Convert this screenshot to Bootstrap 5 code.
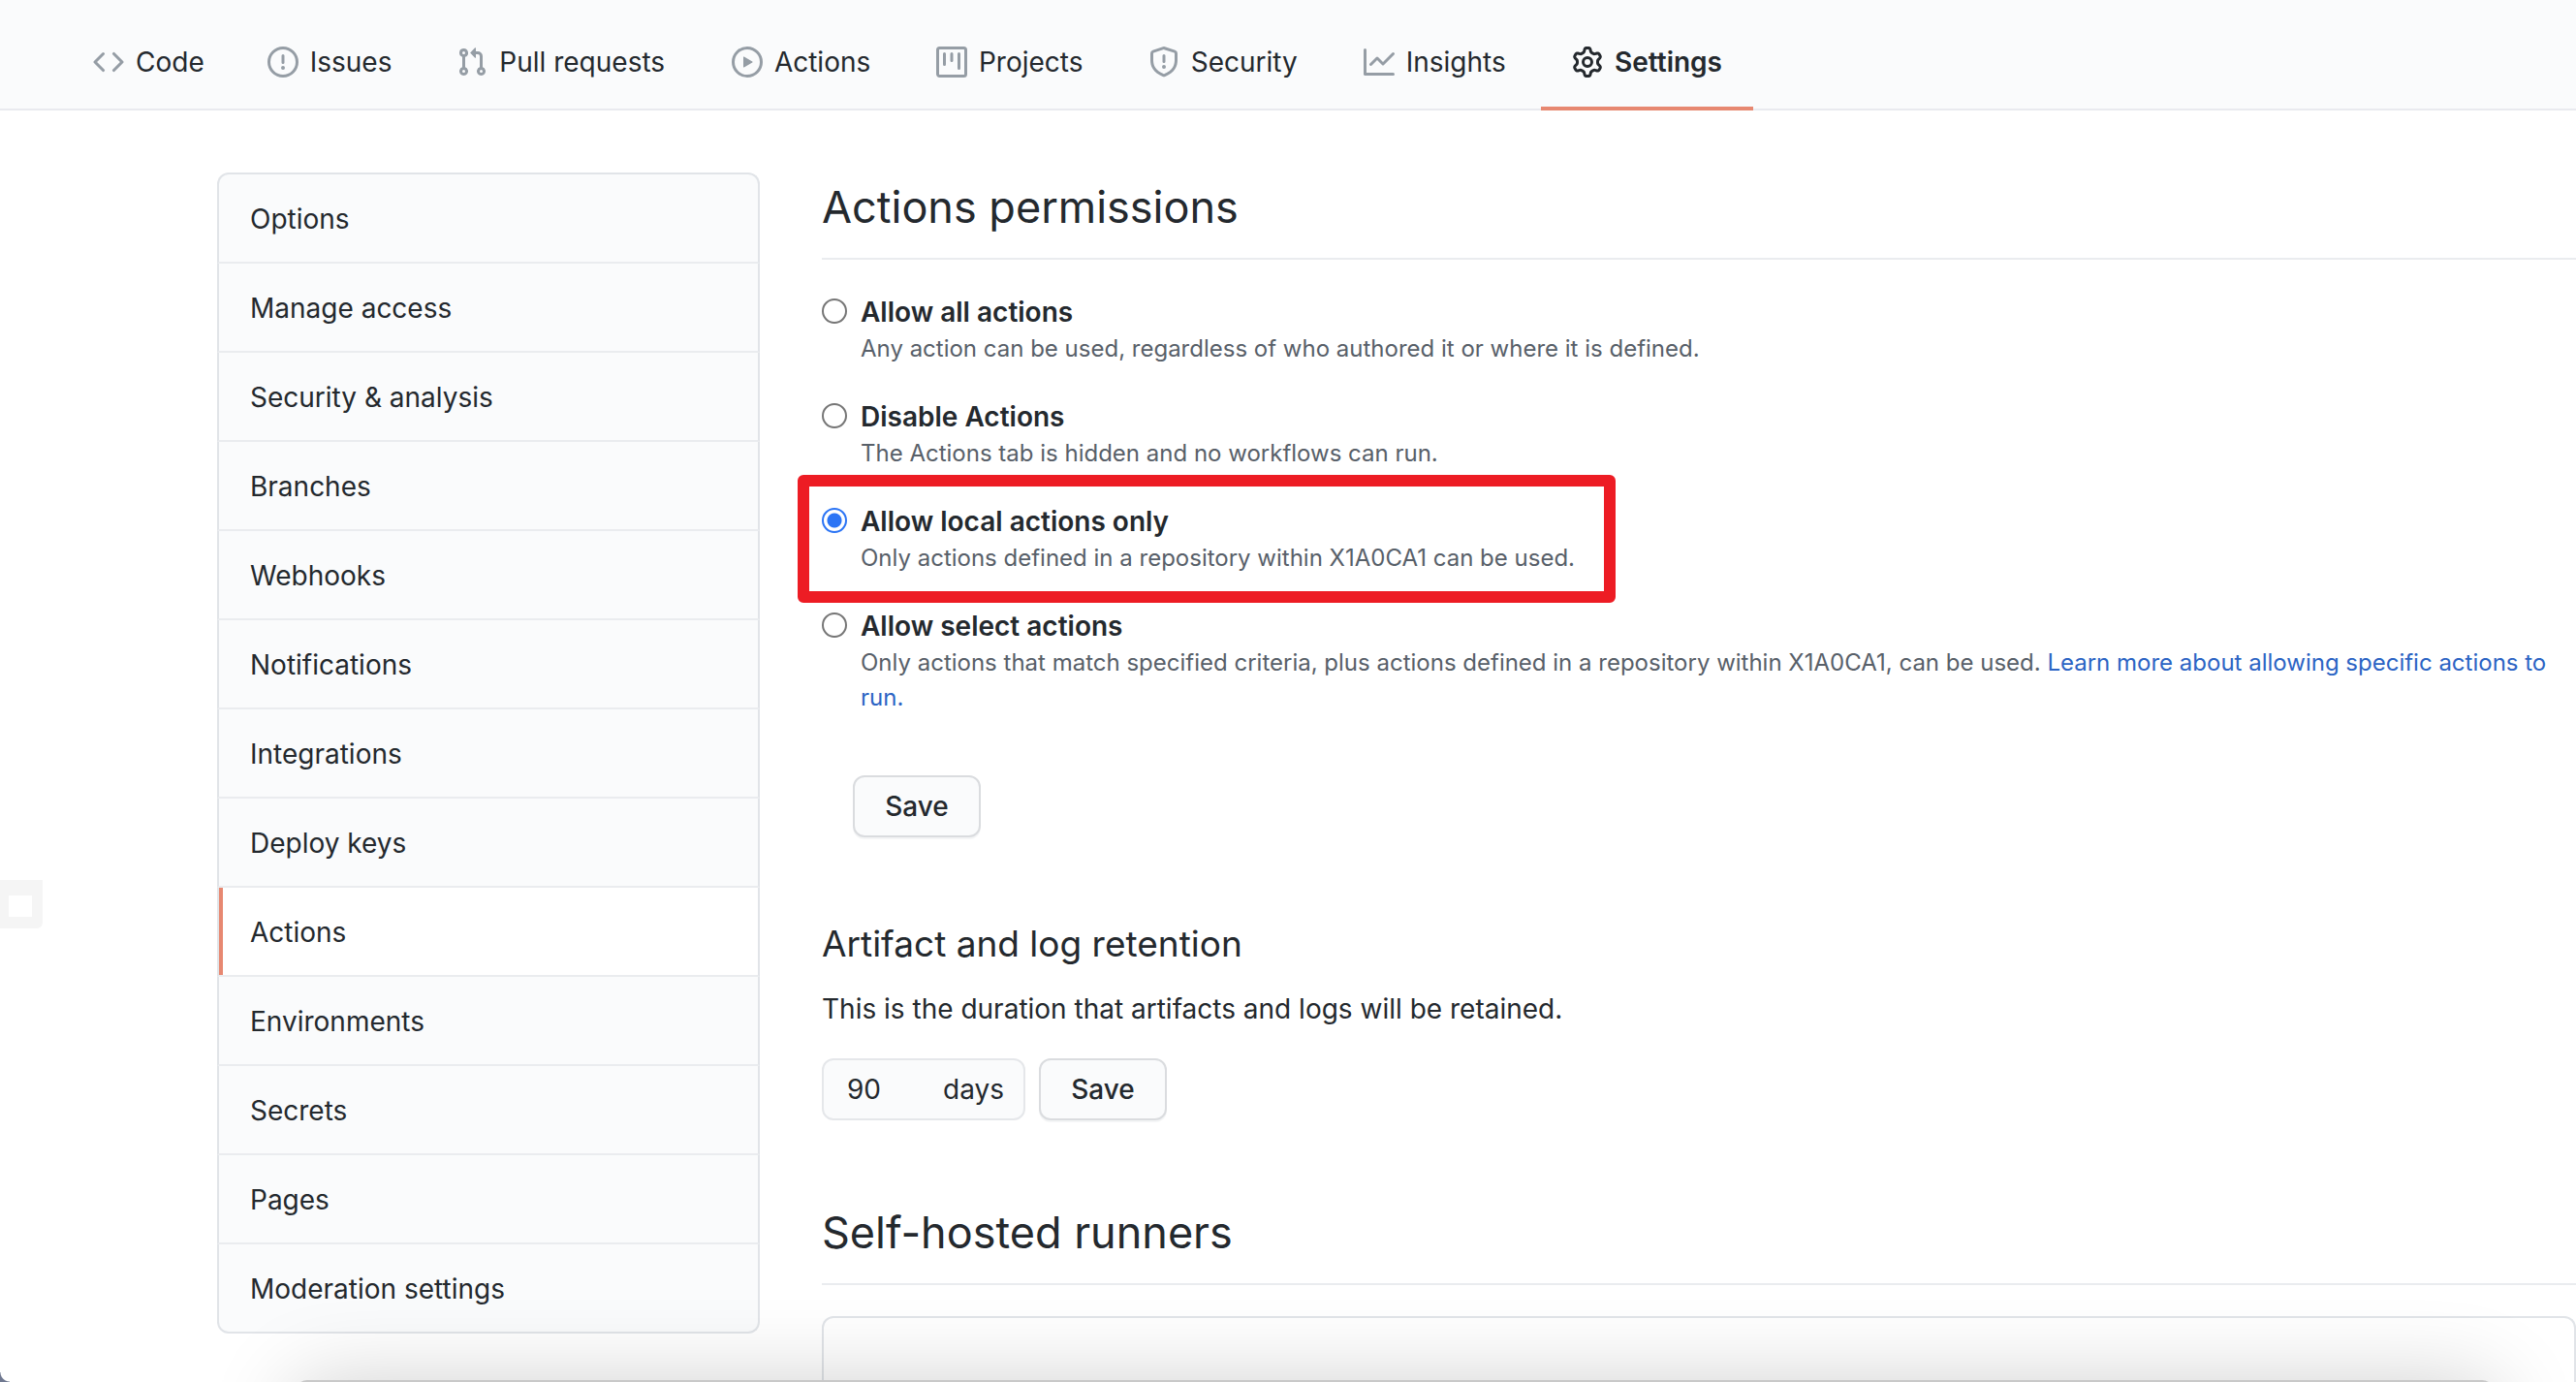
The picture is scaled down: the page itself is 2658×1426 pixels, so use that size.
<!DOCTYPE html>
<html lang="en">
<head>
<meta charset="utf-8">
<meta name="viewport" content="width=device-width, initial-scale=1">
<title>Actions settings</title>
<link href="https://cdn.jsdelivr.net/npm/bootstrap@5.3.0/dist/css/bootstrap.min.css" rel="stylesheet">
<style>
  html { overflow: hidden auto; }
  body { font-family: Inter, "Liberation Sans", sans-serif; font-size: 28px; line-height: 42px; color: #24292e; background: #fff; min-height: 100vh; position: relative; overflow: hidden; }
  .repo-nav { background: #fafbfc; border-bottom: 2px solid #e9eaef; height: 114px; padding: 18px 64px 0; }
  .repo-nav .nav-item { display: flex; margin-bottom: -2px; }
  .repo-nav .nav-link { display: flex; align-items: center; gap: 12px; padding: 0 32px; color: #24292e; border-bottom: 4px solid transparent; }
  .repo-nav .nav-link svg { width: 32px; height: 32px; fill: #959da5; flex: none; }
  .repo-nav .nav-link.active { font-weight: 600; border-color: #e78871; }
  .repo-nav .nav-link.active svg { fill: #24292e; }
  /* reserve the width of the bold label so tabs do not shift when selected */
  .tab-text::before { content: attr(data-label); display: block; height: 0; font-weight: 600; visibility: hidden; }
  .page-body { padding: 64px 0 0 224px; gap: 64px; }
  .side-menu { width: 560px; flex: none; --bs-list-group-border-width: 2px; --bs-list-group-border-color: #e1e4e8; --bs-list-group-border-radius: 12px; }
  .side-menu .list-group-item { background: #fafbfc; color: #24292e; padding: 25px 32px 23px; border-bottom-color: #eaecef; }
  .side-menu .list-group-item:last-child { border-bottom-color: #e1e4e8; }
  .side-menu .list-group-item.active { background: #fff; margin-top: 0; border-top: 0; border-color: #e1e4e8; border-bottom-color: #eaecef; box-shadow: inset 4px 0 #e78871; }
  .section-head { font-size: 45px; line-height: 72px; font-weight: 400; padding-bottom: 16px; margin-bottom: 32px; border-bottom: 2px solid #eaecef; }
  .sub-head { font-size: 37px; line-height: 60px; font-weight: 400; margin: 80px 0 16px; }
  .choice { display: grid; grid-template-columns: 26px 1fr; column-gap: 14px; margin-bottom: 30px; position: relative; }
  .choice .form-check-input { width: 26px; height: 26px; margin: 8px 0 0; border: 2px solid #767676; background-image: none; }
  .choice .form-check-input:checked { border-color: #2b74f5; background: radial-gradient(circle, #2b74f5 7px, #fff 8px); }
  .choice label { font-weight: 600; line-height: 40px; padding-top: 2px; }
  .choice p { grid-column: 2; font-size: 24px; line-height: 36px; color: #586069; margin: 0; }
  .choice a { color: #2c64c4; text-decoration: none; }
  .marker { position: absolute; top: -26px; left: -25px; width: 844px; height: 132px; border: 12px solid #ed1c24; border-radius: 6px; pointer-events: none; }
  .btn-save { width: 132px; height: 64px; padding: 0; font-size: 28px; line-height: 42px; font-weight: 500; color: #24292e; background: #fafbfc; border: 2px solid #dadcdf; border-radius: 12px; box-shadow: 0 2px 0 #f4f5f6; }
  .btn-first { margin: 32px 0 0 32px; }
  .days-box { width: 210px; height: 64px; padding: 0 20px 0 24px; background: #fafbfc; border: 2px solid #e5e7ea; border-radius: 12px; }
  .days-box input { width: 80px; border: 0; padding: 0; background: transparent; font-size: 28px; color: #24292e; }
  .retain-row { gap: 14px; margin: 30px 0 80px; }
  .runner-box { border: 2px solid #e1e4e8; border-bottom: 0; border-radius: 12px 12px 0 0; height: 68px; }
  .edge-handle { position: absolute; left: 0; top: 908px; width: 44px; height: 50px; border: solid #f5f5f5; border-width: 16px 11px 12px 9px; border-radius: 0 0 6px 0; }
  .under-shadow { position: absolute; left: 305px; right: 85px; bottom: -118px; height: 120px; border-radius: 12px; background: #c9c9c9; box-shadow: 0 4px 90px rgba(0,0,0,.2); }
  .window-corner { position: absolute; left: 0; bottom: 0; width: 10px; height: 10px; background: radial-gradient(circle at 10px 0, transparent 9px, #6f7890 10px); }
</style>
</head>
<body>
<nav class="repo-nav d-flex" aria-label="Repository">
  <ul class="nav flex-nowrap align-items-stretch">
    <li class="nav-item"><a class="nav-link" href="#"><svg viewBox="0 0 16 16" aria-hidden="true"><path d="M4.72 3.22a.75.75 0 011.06 1.06L2.06 8l3.72 3.72a.75.75 0 11-1.06 1.06L.47 8.53a.75.75 0 010-1.06l4.25-4.25zm6.56 0a.75.75 0 10-1.06 1.06L13.94 8l-3.72 3.72a.75.75 0 101.06 1.06l4.25-4.25a.75.75 0 000-1.06l-4.25-4.25z"/></svg><span class="tab-text" data-label="Code">Code</span></a></li>
    <li class="nav-item"><a class="nav-link" href="#"><svg viewBox="0 0 16 16" aria-hidden="true"><path d="M8 1.5a6.5 6.5 0 100 13 6.5 6.5 0 000-13zM0 8a8 8 0 1116 0A8 8 0 010 8zm9 3a1 1 0 11-2 0 1 1 0 012 0zm-.25-6.25a.75.75 0 00-1.5 0v3.5a.75.75 0 001.5 0v-3.5z"/></svg><span class="tab-text" data-label="Issues">Issues</span></a></li>
    <li class="nav-item"><a class="nav-link" href="#"><svg viewBox="0 0 16 16" aria-hidden="true"><path d="M7.177 3.073L9.573.677A.25.25 0 0110 .854v4.792a.25.25 0 01-.427.177L7.177 3.427a.25.25 0 010-.354zM3.75 2.5a.75.75 0 100 1.5.75.75 0 000-1.5zm-2.25.75a2.25 2.25 0 113 2.122v5.256a2.251 2.251 0 11-1.5 0V5.372A2.25 2.25 0 011.5 3.25zM11 2.5h-1V4h1a1 1 0 011 1v5.628a2.251 2.251 0 101.5 0V5A2.5 2.5 0 0011 2.5zm1 10.25a.75.75 0 111.5 0 .75.75 0 01-1.5 0zM3.75 12a.75.75 0 100 1.5.75.75 0 000-1.5z"/></svg><span class="tab-text" data-label="Pull requests">Pull requests</span></a></li>
    <li class="nav-item"><a class="nav-link" href="#"><svg viewBox="0 0 16 16" aria-hidden="true"><path d="M1.5 8a6.5 6.5 0 1113 0 6.5 6.5 0 01-13 0zM8 0a8 8 0 100 16A8 8 0 008 0zM6.379 5.227A.25.25 0 006 5.442v5.117a.25.25 0 00.379.214l4.264-2.559a.25.25 0 000-.428L6.379 5.227z"/></svg><span class="tab-text" data-label="Actions">Actions</span></a></li>
    <li class="nav-item"><a class="nav-link" href="#"><svg viewBox="0 0 16 16" aria-hidden="true"><path d="M1.75 0A1.75 1.75 0 000 1.75v12.5C0 15.216.784 16 1.75 16h12.5A1.75 1.75 0 0016 14.25V1.75A1.75 1.75 0 0014.25 0H1.75zM1.5 1.75a.25.25 0 01.25-.25h12.5a.25.25 0 01.25.25v12.5a.25.25 0 01-.25.25H1.75a.25.25 0 01-.25-.25V1.75zM11.75 3a.75.75 0 00-.75.75v7.5a.75.75 0 001.5 0v-7.5a.75.75 0 00-.75-.75zm-8.25.75a.75.75 0 011.5 0v5.5a.75.75 0 01-1.5 0v-5.5zM8 3a.75.75 0 00-.75.75v3.5a.75.75 0 001.5 0v-3.5A.75.75 0 008 3z"/></svg><span class="tab-text" data-label="Projects">Projects</span></a></li>
    <li class="nav-item"><a class="nav-link" href="#"><svg viewBox="0 0 16 16" aria-hidden="true"><path d="M7.467.133a1.75 1.75 0 011.066 0l5.25 1.68A1.75 1.75 0 0115 3.48V7c0 1.566-.32 3.182-1.303 4.682-.983 1.498-2.585 2.813-5.032 3.855a1.7 1.7 0 01-1.33 0c-2.447-1.042-4.049-2.357-5.032-3.855C1.32 10.182 1 8.566 1 7V3.48a1.75 1.75 0 011.217-1.667l5.25-1.68zm.61 1.429a.25.25 0 00-.153 0l-5.25 1.68a.25.25 0 00-.174.238V7c0 1.358.275 2.666 1.057 3.86.784 1.194 2.121 2.34 4.366 3.297a.2.2 0 00.154 0c2.245-.956 3.582-2.104 4.366-3.298C13.225 9.666 13.5 8.36 13.5 7V3.48a.25.25 0 00-.174-.237l-5.25-1.68zM9 10.5a1 1 0 11-2 0 1 1 0 012 0zm-.25-5.75a.75.75 0 10-1.5 0v3a.75.75 0 001.5 0v-3z"/></svg><span class="tab-text" data-label="Security">Security</span></a></li>
    <li class="nav-item"><a class="nav-link" href="#"><svg viewBox="0 0 16 16" aria-hidden="true"><path d="M1.5 1.75a.75.75 0 00-1.5 0v12.5c0 .414.336.75.75.75h14.5a.75.75 0 000-1.5H1.5V1.75zm14.28 2.53a.75.75 0 00-1.06-1.06L10 7.94 7.53 5.47a.75.75 0 00-1.06 0L3.22 8.72a.75.75 0 001.06 1.06L7 7.06l2.47 2.47a.75.75 0 001.06 0l5.25-5.25z"/></svg><span class="tab-text" data-label="Insights">Insights</span></a></li>
    <li class="nav-item"><a class="nav-link active" aria-current="page" href="#"><svg viewBox="0 0 16 16" aria-hidden="true"><path fill-rule="evenodd" d="M7.429 1.525a6.593 6.593 0 011.142 0c.036.003.108.036.137.146l.289 1.105c.147.56.55.967.997 1.189.174.086.341.183.501.29.417.278.97.423 1.53.27l1.102-.303c.11-.03.175.016.195.046.219.31.41.641.573.989.014.031.022.11-.059.19l-.815.806c-.411.406-.562.957-.53 1.456a4.588 4.588 0 010 .582c-.032.499.119 1.05.53 1.456l.815.806c.08.08.073.159.059.19a6.494 6.494 0 01-.573.99c-.02.029-.086.074-.195.045l-1.103-.303c-.559-.153-1.112-.008-1.529.27-.16.107-.327.204-.5.29-.449.222-.851.628-.998 1.189l-.289 1.105c-.029.11-.101.143-.137.146a6.613 6.613 0 01-1.142 0c-.036-.003-.108-.037-.137-.146l-.289-1.105c-.147-.56-.55-.967-.997-1.189a4.502 4.502 0 01-.501-.29c-.417-.278-.97-.423-1.53-.27l-1.102.303c-.11.03-.175-.016-.195-.046a6.492 6.492 0 01-.573-.989c-.014-.031-.022-.11.059-.19l.815-.806c.411-.406.562-.957.53-1.456a4.587 4.587 0 010-.582c.032-.499-.119-1.05-.53-1.456l-.815-.806c-.08-.08-.073-.159-.059-.19a6.44 6.44 0 01.573-.99c.02-.029.086-.075.195-.045l1.103.303c.559.153 1.112.008 1.529-.27.16-.107.327-.204.5-.29.449-.222.851-.628.998-1.189l.289-1.105c.029-.11.101-.143.137-.146zM8 0c-.236 0-.47.01-.701.03-.743.065-1.29.615-1.458 1.261l-.29 1.106c-.017.066-.078.158-.211.224a5.994 5.994 0 00-.668.386c-.123.082-.233.09-.3.071L3.27 2.776c-.644-.177-1.392.02-1.82.63a7.977 7.977 0 00-.704 1.217c-.315.675-.111 1.422.363 1.891l.815.806c.05.048.098.147.088.294a6.084 6.084 0 000 .772c.01.147-.038.246-.088.294l-.815.806c-.474.469-.678 1.216-.363 1.891.2.428.436.835.704 1.218.428.609 1.176.806 1.82.63l1.103-.303c.066-.019.176-.011.299.071.213.143.436.272.668.386.133.066.194.158.212.224l.289 1.106c.169.646.715 1.196 1.458 1.26a8.094 8.094 0 001.402 0c.743-.064 1.29-.614 1.458-1.26l.29-1.106c.017-.066.078-.158.211-.224a5.98 5.98 0 00.668-.386c.123-.082.233-.09.3-.071l1.102.302c.644.177 1.392-.02 1.82-.63.268-.382.505-.789.704-1.217.315-.675.111-1.422-.364-1.891l-.814-.806c-.05-.048-.098-.147-.088-.294a6.1 6.1 0 000-.772c-.01-.147.039-.246.088-.294l.814-.806c.475-.469.679-1.216.364-1.891a7.992 7.992 0 00-.704-1.218c-.428-.609-1.176-.806-1.82-.63l-1.103.303c-.066.019-.176.011-.299-.071a5.991 5.991 0 00-.668-.386c-.133-.066-.194-.158-.212-.224L10.16 1.29C9.99.645 9.444.095 8.701.031A8.094 8.094 0 008 0zm1.5 8a1.5 1.5 0 11-3 0 1.5 1.5 0 013 0zM11 8a3 3 0 11-6 0 3 3 0 016 0z"/></svg><span class="tab-text" data-label="Settings">Settings</span></a></li>
  </ul>
</nav>

<div class="page-body d-flex align-items-start">
  <nav class="side-menu list-group" aria-label="Settings">
    <a class="list-group-item" href="#">Options</a>
    <a class="list-group-item" href="#">Manage access</a>
    <a class="list-group-item" href="#">Security &amp; analysis</a>
    <a class="list-group-item" href="#">Branches</a>
    <a class="list-group-item" href="#">Webhooks</a>
    <a class="list-group-item" href="#">Notifications</a>
    <a class="list-group-item" href="#">Integrations</a>
    <a class="list-group-item" href="#">Deploy keys</a>
    <a class="list-group-item active" aria-current="true" href="#">Actions</a>
    <a class="list-group-item" href="#">Environments</a>
    <a class="list-group-item" href="#">Secrets</a>
    <a class="list-group-item" href="#">Pages</a>
    <a class="list-group-item" href="#">Moderation settings</a>
  </nav>

  <main class="flex-grow-1">
    <h2 class="section-head">Actions permissions</h2>
    <form>
      <div class="choice">
        <input class="form-check-input" type="radio" name="policy" id="p-all">
        <label for="p-all">Allow all actions</label>
        <p>Any action can be used, regardless of who authored it or where it is defined.</p>
      </div>
      <div class="choice">
        <input class="form-check-input" type="radio" name="policy" id="p-none">
        <label for="p-none">Disable Actions</label>
        <p>The Actions tab is hidden and no workflows can run.</p>
      </div>
      <div class="choice">
        <input class="form-check-input" type="radio" name="policy" id="p-local" checked>
        <label for="p-local">Allow local actions only</label>
        <p>Only actions defined in a repository within X1A0CA1 can be used.</p>
        <div class="marker"></div>
      </div>
      <div class="choice">
        <input class="form-check-input" type="radio" name="policy" id="p-select">
        <label for="p-select">Allow select actions</label>
        <p>Only actions that match specified criteria, plus actions defined in a repository within X1A0CA1, can be used. <a href="#">Learn more about allowing specific actions to run.</a></p>
      </div>
      <button type="button" class="btn btn-save btn-first">Save</button>
    </form>

    <h3 class="sub-head">Artifact and log retention</h3>
    <p class="m-0">This is the duration that artifacts and logs will be retained.</p>
    <form class="retain-row d-flex">
      <div class="days-box d-flex align-items-center justify-content-between">
        <input type="text" id="days" value="90">
        <label for="days">days</label>
      </div>
      <button type="button" class="btn btn-save">Save</button>
    </form>

    <h2 class="section-head">Self-hosted runners</h2>
    <div class="runner-box"></div>
  </main>
</div>
<div class="edge-handle"></div>
<div class="under-shadow"></div>
<div class="window-corner"></div>
<script src="https://cdn.jsdelivr.net/npm/bootstrap@5.3.0/dist/js/bootstrap.bundle.min.js"></script>
</body>
</html>
